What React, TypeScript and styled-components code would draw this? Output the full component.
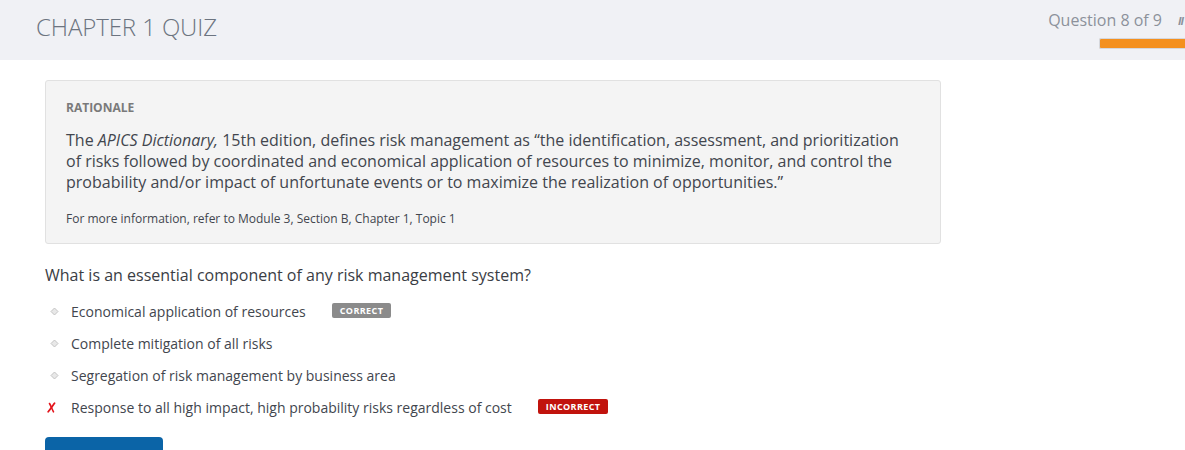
import styled, { createGlobalStyle } from "styled-components";

const GlobalStyle = createGlobalStyle`
  html, body {
    margin: 0;
    padding: 0;
    background: #fff;
    font-family: "Open Sans", "Liberation Sans", Arial, sans-serif;
    overflow: hidden;
  }
`;

const Page = styled.div`
  width: 1185px;
  height: 450px;
  overflow: hidden;
`;

const Header = styled.header`
  height: 60px;
  background: #f0f1f5;
  display: flex;
  justify-content: space-between;
  box-sizing: border-box;
  padding-left: 36px;
`;

const Title = styled.h1`
  margin: 0;
  padding-top: 10px;
  font-size: 24px;
  font-weight: 300;
  color: #6c7480;
  letter-spacing: -0.1px;
`;

const Progress = styled.div`
  display: flex;
  flex-direction: column;
  align-items: flex-end;
  padding-top: 9px;
`;

const CounterRow = styled.div`
  display: flex;
  align-items: center;
  gap: 14px;
`;

const Counter = styled.span`
  font-size: 16px;
  color: #8c919b;
  margin-right: 2px;
`;

const MenuGlyph = styled.span`
  font-size: 11px;
  font-style: italic;
  font-weight: 700;
  color: #8c919b;
  width: 7px;
  overflow: hidden;
  letter-spacing: -1px;
`;

const Bar = styled.div`
  margin-top: 7px;
  width: 85px;
  height: 9px;
  background: #f4901e;
  border: 1px solid #d5d7dc;
  border-right: none;
  border-radius: 2px 0 0 2px;
`;

const Main = styled.main`
  padding: 20px 45px 0;
`;

const Rationale = styled.section`
  width: 896px;
  box-sizing: border-box;
  background: #f4f4f4;
  border: 1px solid #e1e1e1;
  border-radius: 3px;
  padding: 18px 32px 16px 20px;
`;

const Label = styled.div`
  font-size: 12px;
  font-weight: 700;
  color: #7a7a7a;
`;

const Body = styled.p`
  margin: 14px 0 0;
  font-size: 16px;
  line-height: 21px;
  color: #42464e;
`;

const Note = styled.p`
  margin: 17px 0 0;
  font-size: 12px;
  color: #42464e;
`;

const Question = styled.h2`
  margin: 20px 0 0;
  font-size: 16px;
  font-weight: 400;
  color: #3a3d44;
`;

const Options = styled.ul`
  list-style: none;
  margin: 9px 0 0;
  padding: 0;
`;

const Option = styled.li`
  display: flex;
  align-items: center;
  height: 32px;
`;

const Marker = styled.span`
  width: 26px;
  display: flex;
  align-items: center;
  padding-left: 2px;
  box-sizing: border-box;
`;

const OptionText = styled.span`
  font-size: 14px;
  color: #42464e;
`;

const Badge = styled.span<{ $tone: "correct" | "incorrect" }>`
  margin-left: 26px;
  margin-top: -2px;
  font-size: 9px;
  font-weight: 700;
  letter-spacing: 0.4px;
  line-height: 11px;
  color: #fff;
  padding: 2px 8px 2px;
  border-radius: 2px;
  background: ${({ $tone }) => ($tone === "correct" ? "#8b8b8b" : "#c1130d")};
`;

const PrimaryButton = styled.button`
  margin-top: 14px;
  width: 118px;
  height: 40px;
  border: none;
  border-radius: 4px;
  background: #0b64a7;
`;

const Diamond = () => (
  <svg width="9" height="9" viewBox="0 0 9 9" style={{ marginLeft: 3 }}>
    <path d="M4.5 1 L8 4.5 L4.5 8 L1 4.5 Z" fill="#e8e8e8" stroke="#c4c4c4" strokeWidth="1" />
  </svg>
);

const Cross = () => (
  <svg width="9" height="11" viewBox="0 0 9 11">
    <path d="M2.5 1.5 C4 4 5 7 6.5 9.8" stroke="#e3141b" strokeWidth="1.6" fill="none" strokeLinecap="round" />
    <path d="M7.5 1.2 C5.5 4 3.5 7 1.2 9.8" stroke="#e3141b" strokeWidth="1.8" fill="none" strokeLinecap="round" />
  </svg>
);

type Answer = { text: string; marker: "none" | "cross"; badge?: "correct" | "incorrect" };

const answers: Answer[] = [
  { text: "Economical application of resources", marker: "none", badge: "correct" },
  { text: "Complete mitigation of all risks", marker: "none" },
  { text: "Segregation of risk management by business area", marker: "none" },
  { text: "Response to all high impact, high probability risks regardless of cost", marker: "cross", badge: "incorrect" },
];

export default function App() {
  return (
    <Page>
      <GlobalStyle />
      <Header>
        <Title>CHAPTER 1 QUIZ</Title>
        <Progress>
          <CounterRow>
            <Counter>Question 8 of 9</Counter>
            <MenuGlyph>II</MenuGlyph>
          </CounterRow>
          <Bar />
        </Progress>
      </Header>
      <Main>
        <Rationale>
          <Label>RATIONALE</Label>
          <Body>
            The <em>APICS Dictionary,</em> 15th edition, defines risk management as “the identification, assessment, and prioritization
            of risks followed by coordinated and economical application of resources to minimize, monitor, and control the
            probability and/or impact of unfortunate events or to maximize the realization of opportunities.”
          </Body>
          <Note>For more information, refer to Module 3, Section B, Chapter 1, Topic 1</Note>
        </Rationale>
        <Question>What is an essential component of any risk management system?</Question>
        <Options>
          {answers.map((a) => (
            <Option key={a.text}>
              <Marker>{a.marker === "cross" ? <Cross /> : <Diamond />}</Marker>
              <OptionText>{a.text}</OptionText>
              {a.badge && <Badge $tone={a.badge}>{a.badge === "correct" ? "CORRECT" : "INCORRECT"}</Badge>}
            </Option>
          ))}
        </Options>
        <PrimaryButton />
      </Main>
    </Page>
  );
}
